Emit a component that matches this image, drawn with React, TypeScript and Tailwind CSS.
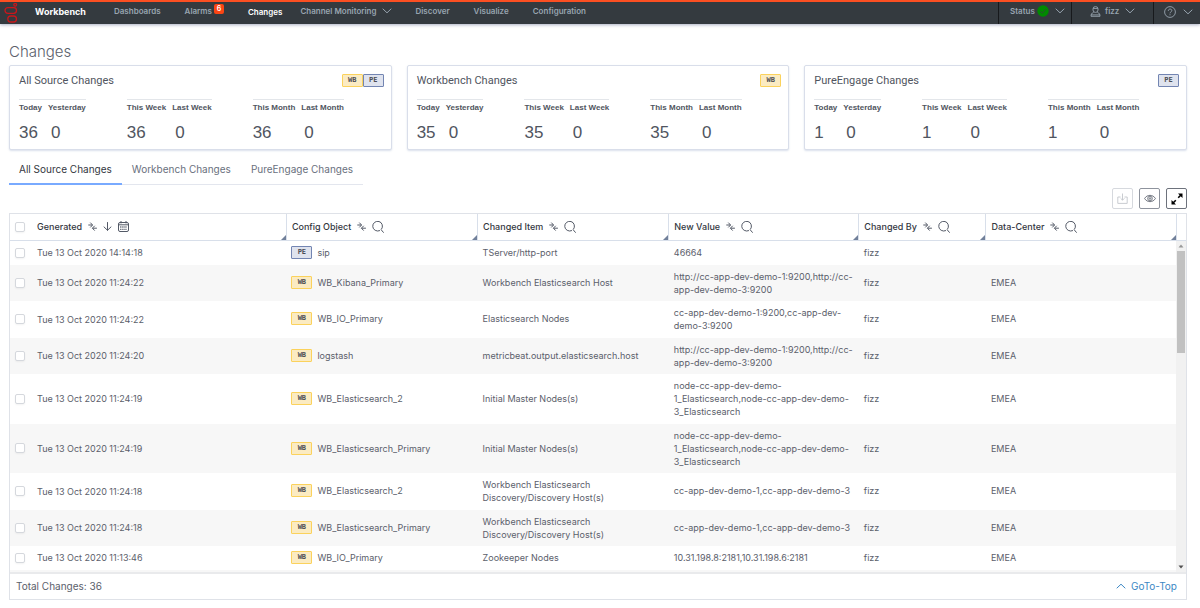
import React, { useState } from 'react';
import clsx from 'clsx';

type Source = 'WB' | 'PE';

interface Change {
  id: number;
  generated: string;
  source: Source;
  configObject: string;
  changedItem: string;
  newValue: string;
  changedBy: string;
  dataCenter: string;
}

interface Summary {
  title: string;
  sources: Source[];
  current: number;
}

const summaries: Summary[] = [
  { title: 'All Source Changes', sources: ['WB', 'PE'], current: 36 },
  { title: 'Workbench Changes', sources: ['WB'], current: 35 },
  { title: 'PureEngage Changes', sources: ['PE'], current: 1 },
];

const periods = [
  ['Today', 'Yesterday'],
  ['This Week', 'Last Week'],
  ['This Month', 'Last Month'],
];

const changes: Change[] = [
  { id: 1, generated: 'Tue 13 Oct 2020 14:14:18', source: 'PE', configObject: 'sip', changedItem: 'TServer/http-port', newValue: '46664', changedBy: 'fizz', dataCenter: '' },
  { id: 2, generated: 'Tue 13 Oct 2020 11:24:22', source: 'WB', configObject: 'WB_Kibana_Primary', changedItem: 'Workbench Elasticsearch Host', newValue: 'http://cc-app-dev-demo-1:9200,http://cc-app-dev-demo-3:9200', changedBy: 'fizz', dataCenter: 'EMEA' },
  { id: 3, generated: 'Tue 13 Oct 2020 11:24:22', source: 'WB', configObject: 'WB_IO_Primary', changedItem: 'Elasticsearch Nodes', newValue: 'cc-app-dev-demo-1:9200,cc-app-dev-demo-3:9200', changedBy: 'fizz', dataCenter: 'EMEA' },
  { id: 4, generated: 'Tue 13 Oct 2020 11:24:20', source: 'WB', configObject: 'logstash', changedItem: 'metricbeat.output.elasticsearch.host', newValue: 'http://cc-app-dev-demo-1:9200,http://cc-app-dev-demo-3:9200', changedBy: 'fizz', dataCenter: 'EMEA' },
  { id: 5, generated: 'Tue 13 Oct 2020 11:24:19', source: 'WB', configObject: 'WB_Elasticsearch_2', changedItem: 'Initial Master Nodes(s)', newValue: 'node-cc-app-dev-demo-1_Elasticsearch,node-cc-app-dev-demo-3_Elasticsearch', changedBy: 'fizz', dataCenter: 'EMEA' },
  { id: 6, generated: 'Tue 13 Oct 2020 11:24:19', source: 'WB', configObject: 'WB_Elasticsearch_Primary', changedItem: 'Initial Master Nodes(s)', newValue: 'node-cc-app-dev-demo-1_Elasticsearch,node-cc-app-dev-demo-3_Elasticsearch', changedBy: 'fizz', dataCenter: 'EMEA' },
  { id: 7, generated: 'Tue 13 Oct 2020 11:24:18', source: 'WB', configObject: 'WB_Elasticsearch_2', changedItem: 'Workbench Elasticsearch Discovery/Discovery Host(s)', newValue: 'cc-app-dev-demo-1,cc-app-dev-demo-3', changedBy: 'fizz', dataCenter: 'EMEA' },
  { id: 8, generated: 'Tue 13 Oct 2020 11:24:18', source: 'WB', configObject: 'WB_Elasticsearch_Primary', changedItem: 'Workbench Elasticsearch Discovery/Discovery Host(s)', newValue: 'cc-app-dev-demo-1,cc-app-dev-demo-3', changedBy: 'fizz', dataCenter: 'EMEA' },
  { id: 9, generated: 'Tue 13 Oct 2020 11:13:46', source: 'WB', configObject: 'WB_IO_Primary', changedItem: 'Zookeeper Nodes', newValue: '10.31.198.8:2181,10.31.198.6:2181', changedBy: 'fizz', dataCenter: 'EMEA' },
];

const columns = ['Config Object', 'Changed Item', 'New Value', 'Changed By', 'Data-Center'];

function Chevron({ up = false }: { up?: boolean }) {
  return (
    <svg className="h-[6px] w-[10px] shrink-0" viewBox="0 0 10 6" fill="none" stroke="currentColor" strokeWidth="1" strokeLinecap="round">
      <path d={up ? 'M1 5 5 1.2 9 5' : 'M1 1 5 4.8 9 1'} />
    </svg>
  );
}

function Logo() {
  return (
    <svg className="h-[20px] w-[14px]" viewBox="0 0 14 20" fill="none" stroke="#c8171b" strokeWidth="1.3">
      <rect x="1" y="4.7" width="11.5" height="5.6" rx="2.8" />
      <rect x="3.8" y="13" width="8.7" height="6" rx="3" />
      <circle cx="11.2" cy="1.8" r="1.4" />
    </svg>
  );
}

function MergeIcon() {
  return (
    <svg className="size-[9px]" viewBox="0 0 9 9" fill="none" stroke="#535966" strokeWidth="1">
      <path d="M.3 3h4M2.3.6 4.6 3 2.3 5.4M8.9 6.2H4.6M6.7 3.8 4.4 6.2l2.3 2.4" />
    </svg>
  );
}

function SearchIcon() {
  return (
    <svg className="size-[12px]" viewBox="0 0 12 12" fill="none" stroke="#535966" strokeWidth="1" strokeLinecap="round">
      <path d="M7.6 9.7A4.9 4.9 0 1 1 9.6 8.1M9.3 8.9l2.1 2.5" />
    </svg>
  );
}

function ArrowDownIcon() {
  return (
    <svg className="size-[9px]" viewBox="0 0 9 9" fill="none" stroke="#535966" strokeWidth="1" strokeLinecap="round">
      <path d="M4.5.5v7.7M1 4.9l3.5 3.4L8 4.9" />
    </svg>
  );
}

function CalendarIcon() {
  return (
    <svg className="size-[11px]" viewBox="0 0 11 11" fill="none" stroke="#535966" strokeWidth="1">
      <rect x=".5" y="1.5" width="10" height="9" rx="1.5" />
      <path d="M.5 3.8h10M3 0v2.4M8 0v2.4" />
      <path d="M2.2 6h6.8M2.2 8.4h6.8" strokeDasharray="1.2 .9" strokeWidth="1.3" />
    </svg>
  );
}

function SourceBadge({ source }: { source: Source }) {
  return (
    <span
      className={clsx(
        "inline-flex h-[13px] w-[21px] shrink-0 items-center justify-center rounded-[1px] border font-['DejaVu_Sans_Mono',monospace] text-[7px] leading-none font-bold text-[#4b4d55]",
        source === 'WB' ? 'border-[#fbd25c] bg-[#fbebc2]' : 'border-[#7385b2] bg-[#dfe3ee]',
      )}
    >
      {source}
    </span>
  );
}

function Checkbox({ label }: { label: string }) {
  return (
    <input
      type="checkbox"
      aria-label={label}
      className="block size-[10px] appearance-none rounded-[2px] border border-[#d5d8dd] bg-white shadow-xs checked:bg-[#79aaff]"
    />
  );
}

function NavLink({ children, active = false }: { children: React.ReactNode; active?: boolean }) {
  return (
    <a href="#" className={clsx('flex items-center', active ? 'pt-[2px] text-white' : 'text-[#98a5b0]')}>
      {children}
    </a>
  );
}

function Header() {
  return (
    <header className="flex h-6 items-stretch border-t-2 border-[#fb4f22] bg-[#343a3f] text-[8px] font-semibold text-[#98a5b0] shadow-[0_1px_3px_rgba(90,100,140,0.5)]">
      <a href="#" aria-label="Home" className="flex w-[35px] items-center pl-1">
        <Logo />
      </a>
      <a href="#" className="flex w-[79px] items-center pb-[2px] text-[9px] font-bold text-white">
        Workbench
      </a>
      <nav className="flex flex-1 items-center gap-6 pb-[4px]">
        <NavLink>Dashboards</NavLink>
        <NavLink>
          Alarms
          <span className="mb-1 ml-[2px] flex h-[10px] w-[10px] items-center justify-center rounded-[2px] bg-[#fb4514] text-[7px] text-white">6</span>
        </NavLink>
        <div className="flex items-center gap-[18px]">
          <NavLink active>Changes</NavLink>
          <NavLink>
            <span className="mr-[5px]">Channel Monitoring</span>
            <Chevron />
          </NavLink>
        </div>
        <NavLink>Discover</NavLink>
        <NavLink>Visualize</NavLink>
        <NavLink>Configuration</NavLink>
      </nav>
      <button className="flex w-[73px] items-center border-l border-[#17191c] pb-[4px] pl-[11px]">
        Status
        <svg className="mr-[6px] ml-[2px] size-[12px]" viewBox="0 0 12 12" fill="none">
          <circle cx="6" cy="6" r="5.7" fill="#008a00" />
          <path d="m3.3 6.2 2 2 3.6-4" stroke="#2f4a35" strokeWidth="1" />
        </svg>
        <Chevron />
      </button>
      <button className="flex w-[82px] items-center border-l border-[#17191c] pb-[4px] pl-[18px]">
        <svg className="mr-[4px] size-[11px]" viewBox="0 0 11 11" fill="none" stroke="currentColor" strokeWidth=".9">
          <rect x="3" y=".6" width="5" height="5.8" rx="2.4" />
          <path d="M3.2 2.4h4.6M3.6 6.4C1.5 7.2 1 8.2 1 10.3h9c0-2.1-.5-3.1-2.6-3.9M1 8.9h9" />
        </svg>
        <span className="mr-[6px]">fizz</span>
        <Chevron />
      </button>
      <button aria-label="Help" className="flex w-[47px] items-center border-l border-[#17191c] pb-[2px] pl-[10px]">
        <svg className="mr-[7px] size-[12px]" viewBox="0 0 12 12" fill="none" stroke="currentColor" strokeWidth=".9">
          <circle cx="6" cy="6" r="5.4" />
          <path d="M4.3 4.8c0-2.4 3.5-2.2 3.5-.2 0 1.3-1.8 1.3-1.8 2.7M6 8.3v1" />
        </svg>
        <Chevron />
      </button>
    </header>
  );
}

function SummaryCard({ summary }: { summary: Summary }) {
  return (
    <section className="rounded-[2px] border border-[#d9deea] bg-white pt-[8px] pr-[7px] pb-[4px] pl-[9px] font-['Liberation_Sans',sans-serif] text-[#505560] shadow-[0_1px_2px_rgba(150,165,200,0.35)]">
      <div className="flex items-start justify-between">
        <h2 className="font-['Roboto',sans-serif] text-[11px] leading-[13px]">{summary.title}</h2>
        <div className="flex">
          {summary.sources.map((source) => (
            <SourceBadge key={source} source={source} />
          ))}
        </div>
      </div>
      <div className="mt-[12px] flex gap-[41px]">
        {periods.map(([current, previous]) => (
          <table key={current} className="border-t border-[#e3e6ea]">
            <thead>
              <tr className="text-left text-[8px] leading-[16px] whitespace-nowrap">
                <th className="pr-[6px]">{current}</th>
                <th>{previous}</th>
              </tr>
            </thead>
            <tbody>
              <tr className="text-[17px] leading-[20px]">
                <td className="pt-[7px] pb-[2px]">{summary.current}</td>
                <td className="pt-[7px] pb-[2px] pl-[3px]">0</td>
              </tr>
            </tbody>
          </table>
        ))}
      </div>
    </section>
  );
}

function HeaderCell({ title }: { title: string }) {
  return (
    <th className="relative border-b border-l border-[#d8dfea] pl-[5px] text-left font-medium">
      <div className="flex items-center gap-[6px]">
        {title}
        <button aria-label={`Resize ${title}`}><MergeIcon /></button>
        <button aria-label={`Search ${title}`}><SearchIcon /></button>
      </div>
      <ResizeHandle />
    </th>
  );
}

function ResizeHandle() {
  return (
    <svg className="absolute right-0 bottom-0 size-[5px]" viewBox="0 0 5 5">
      <path d="M5 0v5H0z" fill="#71809a" />
    </svg>
  );
}

function ChangesTable() {
  return (
    <div className="border border-[#dfe2e8] text-[9px] text-[#5b606b]">
      <div className="flex">
        <div className="min-w-0 flex-1">
          <table className="w-full table-fixed">
            <colgroup>
              <col className="w-[20px]" />
              <col />
              <col className="w-[16.4%]" />
              <col className="w-[16.4%]" />
              <col className="w-[16.3%]" />
              <col className="w-[10.9%]" />
              <col className="w-[16.3%]" />
            </colgroup>
            <thead>
              <tr className="h-[26px] text-[#343741]">
                <th className="border-b border-[#d8dfea] pl-[5px]">
                  <Checkbox label="Select all" />
                </th>
                <th className="relative border-b border-[#d8dfea] pl-[7px] text-left font-medium">
                  <div className="flex items-center gap-[6px]">
                    Generated
                    <button aria-label="Resize Generated"><MergeIcon /></button>
                    <button aria-label="Sort Generated"><ArrowDownIcon /></button>
                    <button aria-label="Pick date"><CalendarIcon /></button>
                  </div>
                  <ResizeHandle />
                </th>
                {columns.map((column) => (
                  <HeaderCell key={column} title={column} />
                ))}
              </tr>
            </thead>
            <tbody>
              {changes.map((change, index) => {
                const cell = clsx('pt-[5px] pl-[5px]', index % 2 === 0 ? 'pb-[6px]' : 'pb-[5px]');
                return (
                  <tr key={change.id} className="leading-[13px] even:bg-[#f7f7f7]">
                    <td className="pl-[5px]">
                      <Checkbox label={`Select change ${change.id}`} />
                    </td>
                    <td className="pl-[7px]">{change.generated}</td>
                    <td className={cell}>
                      <div className="flex items-center gap-[5px]">
                        <SourceBadge source={change.source} />
                        {change.configObject}
                      </div>
                    </td>
                    <td className={cell}>{change.changedItem}</td>
                    <td className={cell}>{change.newValue}</td>
                    <td className={cell}>{change.changedBy}</td>
                    <td className={cell}>{change.dataCenter}</td>
                  </tr>
                );
              })}
            </tbody>
          </table>
          <div className="h-[2px] bg-[#f7f7f7]" />
        </div>
        <div className="flex w-[10px] flex-col">
          <div className="h-[27px] border-b border-l border-[#d8dfea]" />
          <div className="flex flex-1 flex-col items-center justify-between bg-[#f1f1f1]">
            <div className="flex w-full flex-col items-center">
              <svg className="my-[3px] h-[4px] w-[6px]" viewBox="0 0 6 4"><path d="M3 .5 5.5 3.5h-5z" fill="#9a9a9a" /></svg>
              <div className="h-[102px] w-[8px] bg-[#c1c1c1]" />
            </div>
            <svg className="mb-[3px] h-[4px] w-[6px]" viewBox="0 0 6 4"><path d="M3 3.5.5.5h5z" fill="#505050" /></svg>
          </div>
        </div>
      </div>
      <div className="flex h-[27px] items-center justify-between border-t-2 border-[#e9eaec] pr-[9px] pl-[6px] text-[10px]">
        <span>Total Changes: 36</span>
        <a href="#" className="flex items-center gap-[5px] text-[#3c87c4]">
          <Chevron up />
          GoTo-Top
        </a>
      </div>
    </div>
  );
}

export default function App() {
  const [activeTab, setActiveTab] = useState('All Source Changes');

  return (
    <div className="min-h-screen bg-white font-['Inter',sans-serif]">
      <Header />
      <main className="pt-[18px] pr-[13px] pb-2 pl-[9px]">
        <h1 className="text-[15px] leading-[20px] font-light text-[#5a606b]">Changes</h1>
        <div className="mt-[3px] grid grid-cols-3 gap-[15px]">
          {summaries.map((summary) => (
            <SummaryCard key={summary.title} summary={summary} />
          ))}
        </div>
        <div role="tablist" className="mt-[5px] flex w-fit">
          {summaries.map(({ title }) => (
            <button
              key={title}
              role="tab"
              aria-selected={activeTab === title}
              onClick={() => setActiveTab(title)}
              className={clsx(
                'h-[30px] border-b px-[10px] text-[10px]',
                activeTab === title ? 'border-b-2 border-[#79aaff] text-[#343741]' : 'border-[#e3e6ee] text-[#69707d]',
              )}
            >
              {title}
            </button>
          ))}
        </div>
        <div className="mt-[3px] mb-[4px] flex justify-end gap-[6px]">
          <button aria-label="Export" disabled className="flex size-[21px] items-center justify-center rounded-[2px] border border-[#d6d9de] text-[#c3c6cc]">
            <svg className="size-[11px]" viewBox="0 0 11 11" fill="none" stroke="currentColor" strokeWidth=".9">
              <path d="M3.5 4H.8v6.4h9.4V4H7.5M5.5.5v6.6M3.6 5.3l1.9 1.9 1.9-1.9" />
            </svg>
          </button>
          <button aria-label="Show columns" className="flex size-[21px] items-center justify-center rounded-[2px] border border-[#8e939d] text-[#535966]">
            <svg className="h-[9px] w-[12px]" viewBox="0 0 12 9" fill="none" stroke="currentColor" strokeWidth=".8">
              <path d="M.6 4.5C3 .3 9 .3 11.4 4.5 9 8.7 3 8.7.6 4.5z" />
              <circle cx="6" cy="4.5" r="2.3" />
              <circle cx="6" cy="4.5" r=".8" />
            </svg>
          </button>
          <button aria-label="Full screen" className="flex size-[21px] items-center justify-center rounded-[2px] border border-[#6d727c]">
            <svg className="size-[12px]" viewBox="0 0 12 12" fill="#000" stroke="#000">
              <path d="M7 .5h4.5V5zM.5 7v4.5H5z" stroke="none" />
              <path d="m7.2 4.8 3-3M4.8 7.2l-3 3" strokeWidth="1.6" />
            </svg>
          </button>
        </div>
        <ChangesTable />
      </main>
    </div>
  );
}
